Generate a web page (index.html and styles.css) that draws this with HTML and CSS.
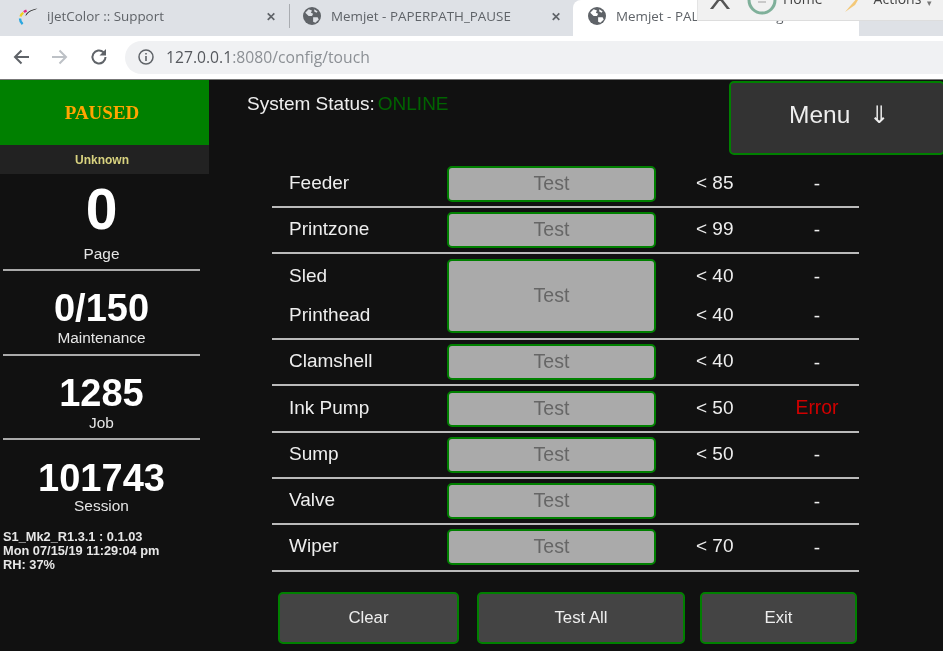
FILE: index.html
```html
<!DOCTYPE html>
<html lang="en">
<head>
<meta charset="utf-8">
<title>Memjet - PAPERPATH_PAUSE</title>
<link rel="stylesheet" href="styles.css">
</head>
<body>
<header class="chrome">
  <div class="tabstrip">
    <div class="tab tab-first">
      <svg class="favicon" viewBox="0 0 20 20"><path d="M2.500 10.500C3 8.800 4 7.500 5.400 6.800" fill="none" stroke="#f0d020" stroke-width="2.400"/><path d="M2 12.500c0 2 .8 4 2.600 5.600" fill="none" stroke="#2aa7e0" stroke-width="2.400"/><path d="M6 6.200c.8-.8 1.600-1.200 2.600-1.600" fill="none" stroke="#e0267f" stroke-width="2.400"/><path d="M7.500 10C8 6.500 12 4 19.500 2.500 17 4 13.500 4.500 11.500 6 10 7 9 8.500 7.500 10z" fill="#222"/></svg>
      <span class="tab-title">iJetColor :: Support</span>
      <span class="tab-close">✕</span>
    </div>
    <div class="tab tab-second">
      <svg class="globe" viewBox="0 0 16 16"><circle cx="8" cy="8" r="8" fill="#5f6368"/><path d="M2 5l3-3 3 1-1 2 2 1-1 2-3 0zM9 9l4 0 1 2-3 3-2-1zM10 2l3 2-1 1-2-1z" fill="#dee1e6"/></svg>
      <span class="tab-title">Memjet - PAPERPATH_PAUSE</span>
      <span class="tab-close">✕</span>
    </div>
    <div class="tab tab-active">
      <svg class="globe" viewBox="0 0 16 16"><circle cx="8" cy="8" r="8" fill="#5f6368"/><path d="M2 5l3-3 3 1-1 2 2 1-1 2-3 0zM9 9l4 0 1 2-3 3-2-1zM10 2l3 2-1 1-2-1z" fill="#fff"/></svg>
      <span class="tab-title">Memjet - PAL Touch Config</span>
    </div>
    <div class="tab tab-last"></div>
  </div>
  <div class="addressbar">
    <svg class="nav" viewBox="0 0 18 18"><path d="M17 9H3M9.500 2.500L3 9l6.500 6.500" fill="none" stroke="#5f6368" stroke-width="2"/></svg>
    <svg class="nav" viewBox="0 0 18 18"><path d="M1 9h14M8.500 2.500L15 9l-6.500 6.500" fill="none" stroke="#bdc1c6" stroke-width="2"/></svg>
    <svg class="nav" viewBox="0 0 18 18"><path d="M15.500 9a6.500 6.500 0 1 1-2-4.700" fill="none" stroke="#5f6368" stroke-width="2"/><path d="M16 1v6.500H9.500z" fill="#5f6368"/></svg>
    <div class="omnibox">
      <svg class="info" viewBox="0 0 16 16"><circle cx="8" cy="8" r="7" fill="none" stroke="#5f6368" stroke-width="1.500"/><path d="M8 7v5M8 4v1.600" stroke="#5f6368" stroke-width="1.600"/></svg>
      <span class="url-host">127.0.0.1</span><span class="url-rest">:8080/config/touch</span>
    </div>
  </div>
</header>

<div class="overlay-toolbar">
  <svg class="ov-chevron" viewBox="0 0 24 12"><path d="M2 14L12 1l10 13" fill="none" stroke="#555" stroke-width="2.500"/></svg>
  <svg class="ov-home" viewBox="0 0 30 16"><path d="M2 0a13 13 0 0 0 26 0" fill="none" stroke="#7fb09a" stroke-width="3"/><path d="M11 2h8" stroke="#bbb" stroke-width="1.500"/></svg>
  <span class="ov-label ov-label-home">Home</span>
  <svg class="ov-bolt" viewBox="0 0 16 14"><path d="M13 -3L0 12l10-7 3-5z" fill="#f3c878"/></svg>
  <span class="ov-label ov-label-actions">Actions</span>
  <span class="ov-caret">▾</span>
</div>

<main class="app">
  <aside class="sidebar">
    <div class="state">PAUSED</div>
    <div class="substate">Unknown</div>
    <section class="counter counter-page">
      <div class="count count-big">0</div>
      <div class="count-label">Page</div>
    </section>
    <section class="counter">
      <div class="count">0/150</div>
      <div class="count-label">Maintenance</div>
    </section>
    <section class="counter">
      <div class="count">1285</div>
      <div class="count-label">Job</div>
    </section>
    <section class="counter counter-last">
      <div class="count">101743</div>
      <div class="count-label">Session</div>
    </section>
    <div class="meta">S1_Mk2_R1.3.1 : 0.1.03<br>Mon 07/15/19 11:29:04 pm<br>RH: 37%</div>
  </aside>

  <section class="content">
    <div class="topline">
      <div class="status">System Status:<span class="online">ONLINE</span></div>
      <button class="menu">Menu <span class="menu-arrow">⇓</span></button>
    </div>
    <div class="tests">
      <div class="row"><div class="name">Feeder</div><button class="test">Test</button><div class="limit">&lt; 85</div><div class="result">-</div></div>
      <div class="row"><div class="name">Printzone</div><button class="test">Test</button><div class="limit">&lt; 99</div><div class="result">-</div></div>
      <div class="row row-double">
        <div class="name">Sled</div><button class="test test-double">Test</button><div class="limit">&lt; 40</div><div class="result">-</div>
        <div class="name">Printhead</div><div class="limit">&lt; 40</div><div class="result">-</div>
      </div>
      <div class="row"><div class="name">Clamshell</div><button class="test">Test</button><div class="limit">&lt; 40</div><div class="result">-</div></div>
      <div class="row"><div class="name">Ink Pump</div><button class="test">Test</button><div class="limit">&lt; 50</div><div class="result result-error">Error</div></div>
      <div class="row"><div class="name">Sump</div><button class="test">Test</button><div class="limit">&lt; 50</div><div class="result">-</div></div>
      <div class="row"><div class="name">Valve</div><button class="test">Test</button><div class="limit"></div><div class="result">-</div></div>
      <div class="row"><div class="name">Wiper</div><button class="test">Test</button><div class="limit">&lt; 70</div><div class="result">-</div></div>
    </div>
    <div class="actions">
      <button class="action action-clear">Clear</button>
      <button class="action action-all">Test All</button>
      <button class="action action-exit">Exit</button>
    </div>
  </section>
</main>
</body>
</html>
```
FILE: styles.css
```css
* { box-sizing: border-box; }
html, body { margin: 0; height: 100%; overflow: hidden; background: #111; }
body { width: 943px; height: 651px; font-family: "Liberation Sans", Arial, sans-serif; position: relative; filter: blur(0.45px); }
button { font-family: inherit; cursor: pointer; }

.chrome { height: 80px; background: #fff; border-bottom: 1px solid #777; }
.tabstrip { height: 36px; background: #dee1e6; display: flex; color: #5f6368; font-family: "Open Sans", "Liberation Sans", sans-serif; font-size: 13.4px; }
.tab { display: flex; align-items: center; height: 36px; padding-bottom: 4px; }
.tab-first { width: 290px; padding: 0 13px 0 18px; border-right: 1px solid #a9acb1; height: 24px; margin-top: 4px; }
.tab-second { width: 283px; padding: 0 12px 4px 13px; background: #dee1e6; border-radius: 0 0 8px 0; }
.tab-active { width: 286px; padding: 0 0 4px 15px; background: #fff; border-radius: 8px 8px 0 0; }
.tab-last { flex: 1; border-radius: 0 0 0 8px; background: #dee1e6; }
.favicon { width: 20px; height: 20px; margin-right: 9px; }
.globe { width: 18px; height: 18px; margin-right: 10px; }
.tab-title { flex: 1; white-space: nowrap; overflow: hidden; }
.tab-close { font-size: 12px; color: #5f6368; font-weight: 700; }

.addressbar { height: 43px; display: flex; align-items: center; padding: 0 0 1px 12px; background: #fff; }
.nav { width: 18px; height: 18px; margin-right: 21px; }
.nav:nth-child(3) { margin-right: 17px; }
.omnibox { flex: 1; height: 33px; background: #f0f1f3; border-radius: 17px 0 0 17px; display: flex; align-items: center; padding-left: 13px; font-family: "Open Sans", "Liberation Sans", sans-serif; font-size: 15.7px; }
.info { width: 16px; height: 16px; margin-right: 12px; }
.url-host { color: #55585d; }
.url-rest { color: #8c9095; }

.overlay-toolbar { position: absolute; left: 697px; top: 0; width: 246px; height: 21px; background: #f1f1f1; border-bottom: 1px solid #ddd; border-left: 1px solid #e4e4e4; display: flex; align-items: flex-start; overflow: hidden; font-family: "Open Sans", "Liberation Sans", sans-serif; font-size: 14px; color: #444; }
.ov-chevron { width: 24px; height: 12px; margin: 0 0 0 10px; flex: none; transform: translateY(-3px); }
.ov-home { width: 30px; height: 16px; margin-left: 15px; flex: none; }
.ov-label { line-height: 13px; margin-top: -8px; }
.ov-label-home { margin-left: 6px; }
.ov-label-actions { margin-left: 13px; }
.ov-bolt { width: 16px; height: 14px; margin: 0 0 0 22px; flex: none; }
.ov-caret { font-size: 9px; margin: -4px 0 0 6px; color: #777; }

.app { height: 571px; display: flex; align-items: stretch; }
.sidebar { width: 209px; flex: none; color: #fff; text-align: center; }
.state { height: 65px; background: #008000; color: #ffa500; font-family: "Liberation Serif", serif; font-weight: 700; font-size: 19px; display: flex; align-items: center; justify-content: center; padding: 1px 5px 0 0; }
.substate { height: 29px; background: #222; color: #d8d27f; font-size: 12px; font-weight: 700; display: flex; align-items: center; justify-content: center; padding-right: 5px; }
.counter { margin: 0 9px 0 3px; height: 84.5px; border-bottom: 2px solid #aaa; padding-top: 17px; }
.counter-page { height: 97px; padding-top: 5px; }
.counter-last { border-bottom: 0; height: 90px; padding-top: 19px; }
.count { font-size: 38px; font-weight: 700; line-height: 40px; }
.count-big { font-size: 57px; line-height: 60px; }
.count-label { font-size: 15.4px; line-height: 19px; color: #e6e6e6; }
.counter-page .count-label { margin-top: 5px; }
.counter-last .count { line-height: 38px; }
.counter-last .count-label { line-height: 17px; }
.meta { padding-left: 3px; text-align: left; font-size: 12.8px; font-weight: 700; line-height: 14px; color: #e6e6e6; }

.content { flex: 1; min-width: 0; color: #fff; }
.topline { height: 81.5px; display: flex; justify-content: space-between; align-items: flex-start; padding-left: 38px; }
.status { font-size: 19px; margin-top: 13px; color: #eee; }
.online { color: #006400; margin-left: 3px; }
.menu { width: 216px; height: 74px; margin: 1px -2px 0 0; background: #333; color: #eee; border: 2px solid #008000; border-radius: 5px; font-size: 24.5px; text-align: left; padding: 0 0 6px 58px; }
.menu-arrow { margin-left: 12px; font-family: "DejaVu Sans", sans-serif; font-size: 24px; }

.tests { margin-left: 63px; width: 587px; }
.row { display: grid; grid-template-columns: 175px 209px 119px 1fr; height: 46.3px; align-items: center; border-bottom: 2px solid #bbb; font-size: 19px; }
.row-double { grid-template-rows: 39px 39px; height: 86px; align-content: center; }
.name { padding-left: 17px; color: #eee; margin-top: -2px; }
.limit { padding-left: 40px; color: #eee; margin-top: -2px; }
.result { text-align: center; color: #eee; margin-top: 1px; }
.result-error { color: #d00000; font-size: 19.4px; margin-top: -2px; }
.test { height: 36px; background: #aaa; color: #666; border: 2px solid #008000; border-radius: 5px; font-size: 19.5px; padding: 0 0 1px; }
.test-double { grid-row: 1 / span 2; grid-column: 2; height: 74px; }

.actions { display: flex; margin: 20.4px 0 0 69px; }
.action { height: 52px; background: #444; color: #eee; border: 2px solid #008000; border-radius: 5px; font-size: 16.8px; padding: 0; }
.action-clear { width: 181px; margin-right: 18px; }
.action-all { width: 208px; margin-right: 15px; }
.action-exit { width: 157px; }
```
